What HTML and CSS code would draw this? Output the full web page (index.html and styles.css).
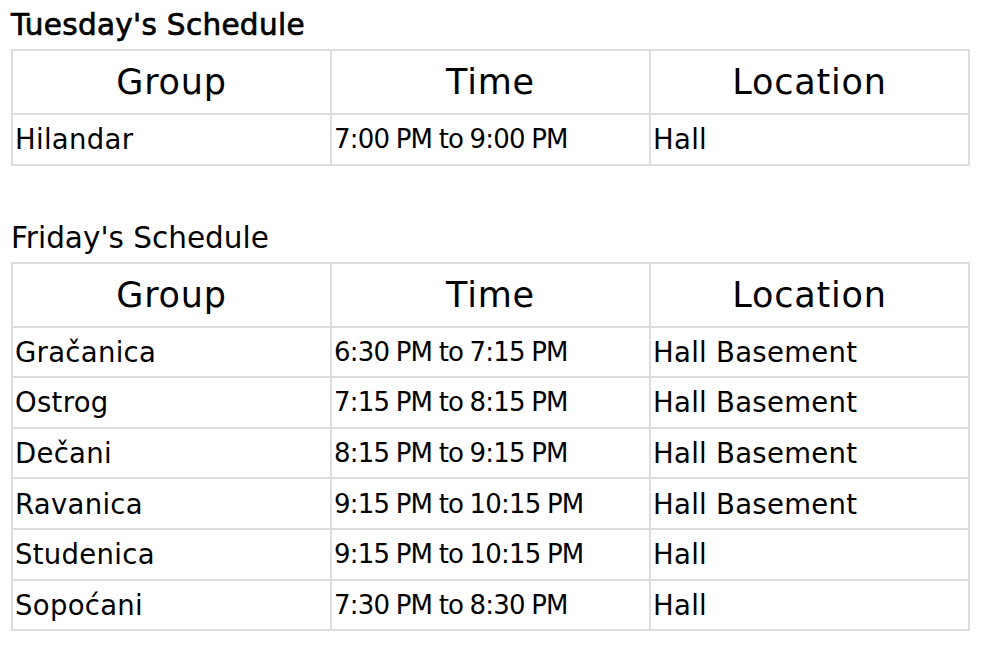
FILE: index.html
```html
<!DOCTYPE html>
<html>
<head>
<meta charset="utf-8">
<link rel="stylesheet" href="styles.css">
</head>
<body>
<h2 class="title title-strong">Tuesday's Schedule</h2>
<table class="sched">
  <tr class="head"><th>Group</th><th>Time</th><th>Location</th></tr>
  <tr><td>Hilandar</td><td class="time">7:00 PM to 9:00 PM</td><td>Hall</td></tr>
</table>
<h2 class="title title-second">Friday's Schedule</h2>
<table class="sched">
  <tr class="head"><th>Group</th><th>Time</th><th>Location</th></tr>
  <tr><td>Gračanica</td><td class="time">6:30 PM to 7:15 PM</td><td>Hall Basement</td></tr>
  <tr><td>Ostrog</td><td class="time">7:15 PM to 8:15 PM</td><td>Hall Basement</td></tr>
  <tr><td>Dečani</td><td class="time">8:15 PM to 9:15 PM</td><td>Hall Basement</td></tr>
  <tr><td>Ravanica</td><td class="time">9:15 PM to 10:15 PM</td><td>Hall Basement</td></tr>
  <tr><td>Studenica</td><td class="time">9:15 PM to 10:15 PM</td><td>Hall</td></tr>
  <tr><td>Sopoćani</td><td class="time">7:30 PM to 8:30 PM</td><td>Hall</td></tr>
</table>
</body>
</html>
```

FILE: styles.css
```css
html, body {
  background: #fff;
}
body {
  margin: 0;
  padding: 9px 12px 0 11px;
  font-family: "DejaVu Sans", sans-serif;
  color: #000;
}
.title {
  margin: 0;
  font-size: 29.5px;
  line-height: 32px;
  font-weight: normal;
  letter-spacing: 0;
}
.title-strong {
  -webkit-text-stroke: 0.7px #000;
  letter-spacing: 0.3px;
}
.title-second {
  margin-top: 56px;
}
.sched {
  margin-top: 8px;
  width: 100%;
  table-layout: fixed;
  border-collapse: separate;
  border-spacing: 0;
  border-top: 2px solid #ddd;
  border-left: 2px solid #ddd;
}
.sched th, .sched td {
  border-right: 2px solid #ddd;
  border-bottom: 2px solid #ddd;
  padding: 0 2px;
  vertical-align: middle;
  white-space: nowrap;
  overflow: hidden;
}
.sched th {
  font-size: 35px;
  font-weight: normal;
  text-align: center;
  letter-spacing: 0.8px;
}
.sched td {
  font-size: 27.5px;
  text-align: left;
  letter-spacing: 0.3px;
}
.sched td.time {
  font-size: 26px;
  letter-spacing: -0.8px;
  word-spacing: -1px;
}
.sched tr {
  height: 50.6px;
}
.sched tr.head {
  height: 64px;
}
```
